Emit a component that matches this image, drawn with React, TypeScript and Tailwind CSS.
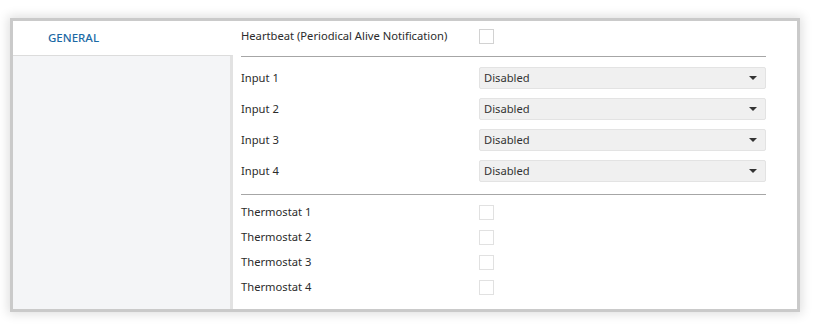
const font = { fontFamily: "'Noto Sans', sans-serif" };

function Checkbox({ light }: { light?: boolean }) {
  return (
    <div
      className={
        "w-[15px] h-[15px] bg-white border " +
        (light ? "border-[#e1e1e1]" : "border-[#d2d2d2]")
      }
    />
  );
}

function Select() {
  return (
    <div className="flex-1 h-[22px] flex items-center justify-between bg-[#f0f0f0] border border-[#e3e3e3] rounded-[2px] pl-[4px] pr-[8px]">
      <span className="text-[#333333]">Disabled</span>
      <span className="w-0 h-0 border-l-[4px] border-r-[4px] border-t-[4px] border-l-transparent border-r-transparent border-t-[#333333]" />
    </div>
  );
}

export default function App() {
  const inputs = ["Input 1", "Input 2", "Input 3", "Input 4"];
  const thermostats = ["Thermostat 1", "Thermostat 2", "Thermostat 3", "Thermostat 4"];

  return (
    <div className="w-[816px] h-[331px] bg-white pt-[21px] pl-[13px]" style={font}>
      <div className="w-[784px] h-[288px] bg-white flex shadow-[0_0_0_3px_#cacaca,0_0_10px_5px_rgba(0,0,0,0.13)]">
        {/* left nav */}
        <div className="w-[220px] flex flex-col">
          <div className="h-[34px] flex items-center pl-[35px] text-[11.5px] font-medium text-[#1c6aa5]">
            GENERAL
          </div>
          <div className="flex-1 bg-[#f4f5f7] border-t border-[#dcdcdc] border-r-[3px] border-r-[#e2e2e2]" />
        </div>

        {/* content */}
        <div className="flex-1 pl-[8px] pr-[31px] text-[11.2px] text-[#2b2b2b]">
          <div className="h-[30px] flex items-center">
            <span className="w-[238px]">Heartbeat (Periodical Alive Notification)</span>
            <Checkbox />
          </div>
          <div className="mt-[5px] border-t border-[#a6a6a6]" />

          <div className="pt-[10px] flex flex-col gap-[9px]">
            {inputs.map((label) => (
              <div key={label} className="h-[22px] flex items-center">
                <span className="w-[238px]">{label}</span>
                <Select />
              </div>
            ))}
          </div>
          <div className="mt-[12px] border-t border-[#a6a6a6]" />

          <div className="pt-[5px] flex flex-col">
            {thermostats.map((label) => (
              <div key={label} className="h-[25px] flex items-center">
                <span className="w-[238px]">{label}</span>
                <Checkbox light />
              </div>
            ))}
          </div>
        </div>
      </div>
    </div>
  );
}
